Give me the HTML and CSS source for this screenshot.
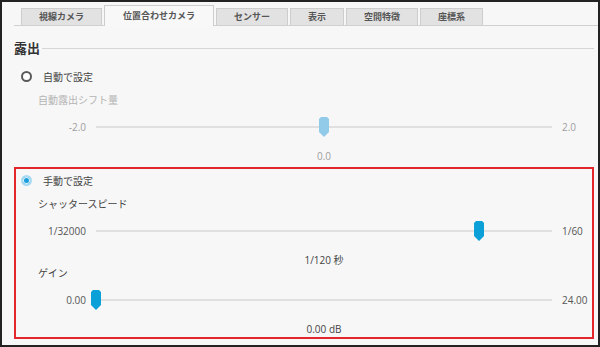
FILE: index.html
```html
<!DOCTYPE html>
<html lang="ja">
  <head>
    <meta charset="UTF-8" />
    <title>カメラ設定 - 露出</title>
    <link rel="stylesheet" href="styles.css">
  </head>
  <body>
    <div class="window">
      <div class="tabs">
        <div class="tab">視線カメラ</div>
        <div class="tab active">位置合わせカメラ</div>
        <div class="tab">センサー</div>
        <div class="tab">表示</div>
        <div class="tab">空間特徴</div>
        <div class="tab">座標系</div>
      </div>

      <div class="panel">
        <div class="group-title">
          <span>露出</span>
          <i class="rule"></i>
        </div>

        <div class="auto disabled">
          <div class="radio-row">
            <span class="radio"></span>
            <span>自動で設定</span>
          </div>
          <div class="slider-block">
            <div class="field-label">自動露出シフト量</div>
            <div class="slider">
              <span class="min">-2.0</span>
              <div class="track"><span class="thumb" style="left: 50%"></span></div>
              <span class="max">2.0</span>
            </div>
            <div class="value">0.0</div>
          </div>
        </div>

        <!-- 手動設定（赤枠） -->
        <div class="manual">
          <div class="radio-row">
            <span class="radio checked"></span>
            <span>手動で設定</span>
          </div>
          <div class="slider-block">
            <div class="field-label">シャッタースピード</div>
            <div class="slider">
              <span class="min">1/32000</span>
              <div class="track"><span class="thumb" style="left: 84%"></span></div>
              <span class="max">1/60</span>
            </div>
            <div class="value">1/120 秒</div>
          </div>
          <div class="slider-block">
            <div class="field-label">ゲイン</div>
            <div class="slider">
              <span class="min">0.00</span>
              <div class="track"><span class="thumb" style="left: 0%"></span></div>
              <span class="max">24.00</span>
            </div>
            <div class="value">0.00 dB</div>
          </div>
        </div>
      </div>
    </div>
  </body>
</html>
```

FILE: styles.css
```css
* {
  margin: 0;
  padding: 0;
  box-sizing: border-box;
  font-family: "Open Sans", "Noto Sans CJK JP", sans-serif;
}

body {
  width: 600px;
  height: 347px;
  background: #fff;
}

.window {
  width: 600px;
  height: 347px;
  border: 2px solid #222;
  background: #f7f7f7;
}

/* タブ */
.tabs {
  display: flex;
  align-items: flex-end;
  gap: 2px;
  height: 24px;
  margin-left: 12px;
  padding-left: 7px;
  border-bottom: 1px solid #d0d0d0;
}

.tab {
  height: 17px;
  padding: 0 17px;
  background: #e2e2e2;
  border: 1px solid #cdcdcd;
  border-bottom: none;
  color: #555;
  font-family: "Noto Sans CJK JP", sans-serif;
  font-size: 9px;
  font-weight: bold;
  line-height: 16px;
  text-align: center;
}

.tab.active {
  height: 21px;
  margin-bottom: -1px;
  padding: 0 18px;
  background: #f8f8f8;
  line-height: 19px;
}

.panel {
  padding: 0 4px 0 12px;
}

.group-title {
  display: flex;
  align-items: center;
  gap: 2px;
  height: 16px;
  margin-top: 13px;
  color: #333;
  font-family: "Noto Sans CJK JP", sans-serif;
  font-size: 13px;
  font-weight: bold;
}

.group-title .rule {
  flex: 1;
  height: 1px;
  margin-top: 2px;
  background: #d6d6d6;
}

.auto {
  padding: 0 2px;
  margin-top: 13px;
}

.radio-row {
  display: flex;
  align-items: center;
  gap: 11px;
  height: 16px;
  padding-left: 5px;
  color: #444;
  font-family: "Noto Sans CJK JP", sans-serif;
  font-size: 10px;
}

.radio {
  width: 11px;
  height: 11px;
  border: 2px solid #5a5a5a;
  border-radius: 50%;
  background: #fff;
}

.radio.checked {
  border: 2px solid #a9daf3;
  background: #1a9edb;
  box-shadow: inset 0 0 0 1px #e4f4fc;
}

.slider-block {
  height: 69px;
}

.radio-row + .slider-block {
  margin-top: 9px;
}

.field-label {
  height: 14px;
  padding-left: 22px;
  color: #444;
  font-family: "Noto Sans CJK JP", sans-serif;
  font-size: 10px;
  line-height: 14px;
}

.slider {
  display: flex;
  align-items: center;
  gap: 10px;
  height: 20px;
  margin-top: 10px;
  color: #555;
  font-size: 10px;
}

.min {
  width: 70px;
  text-align: right;
}

.track {
  position: relative;
  width: 456px;
  height: 2px;
  background: #e0e0e0;
}

.thumb {
  position: absolute;
  top: -9px;
  width: 10px;
  height: 20px;
  margin-left: -5px;
  background: #0ba0d8;
  clip-path: polygon(0 2px, 2px 0, 8px 0, 10px 2px, 10px 15px, 5px 20px, 0 15px);
}

.value {
  width: 456px;
  height: 12px;
  margin: 13px 0 0 80px;
  color: #444;
  font-size: 10px;
  line-height: 12px;
  text-align: center;
}

/* 無効状態 */
.disabled .field-label {
  color: #b4b4b4;
}

.disabled .slider,
.disabled .value {
  color: #a0a0a0;
}

.disabled .thumb {
  background: #92cbea;
}

.manual {
  margin-top: 5px;
  padding: 3px 0 2px;
  border: 2px solid #e3262b;
}
```
